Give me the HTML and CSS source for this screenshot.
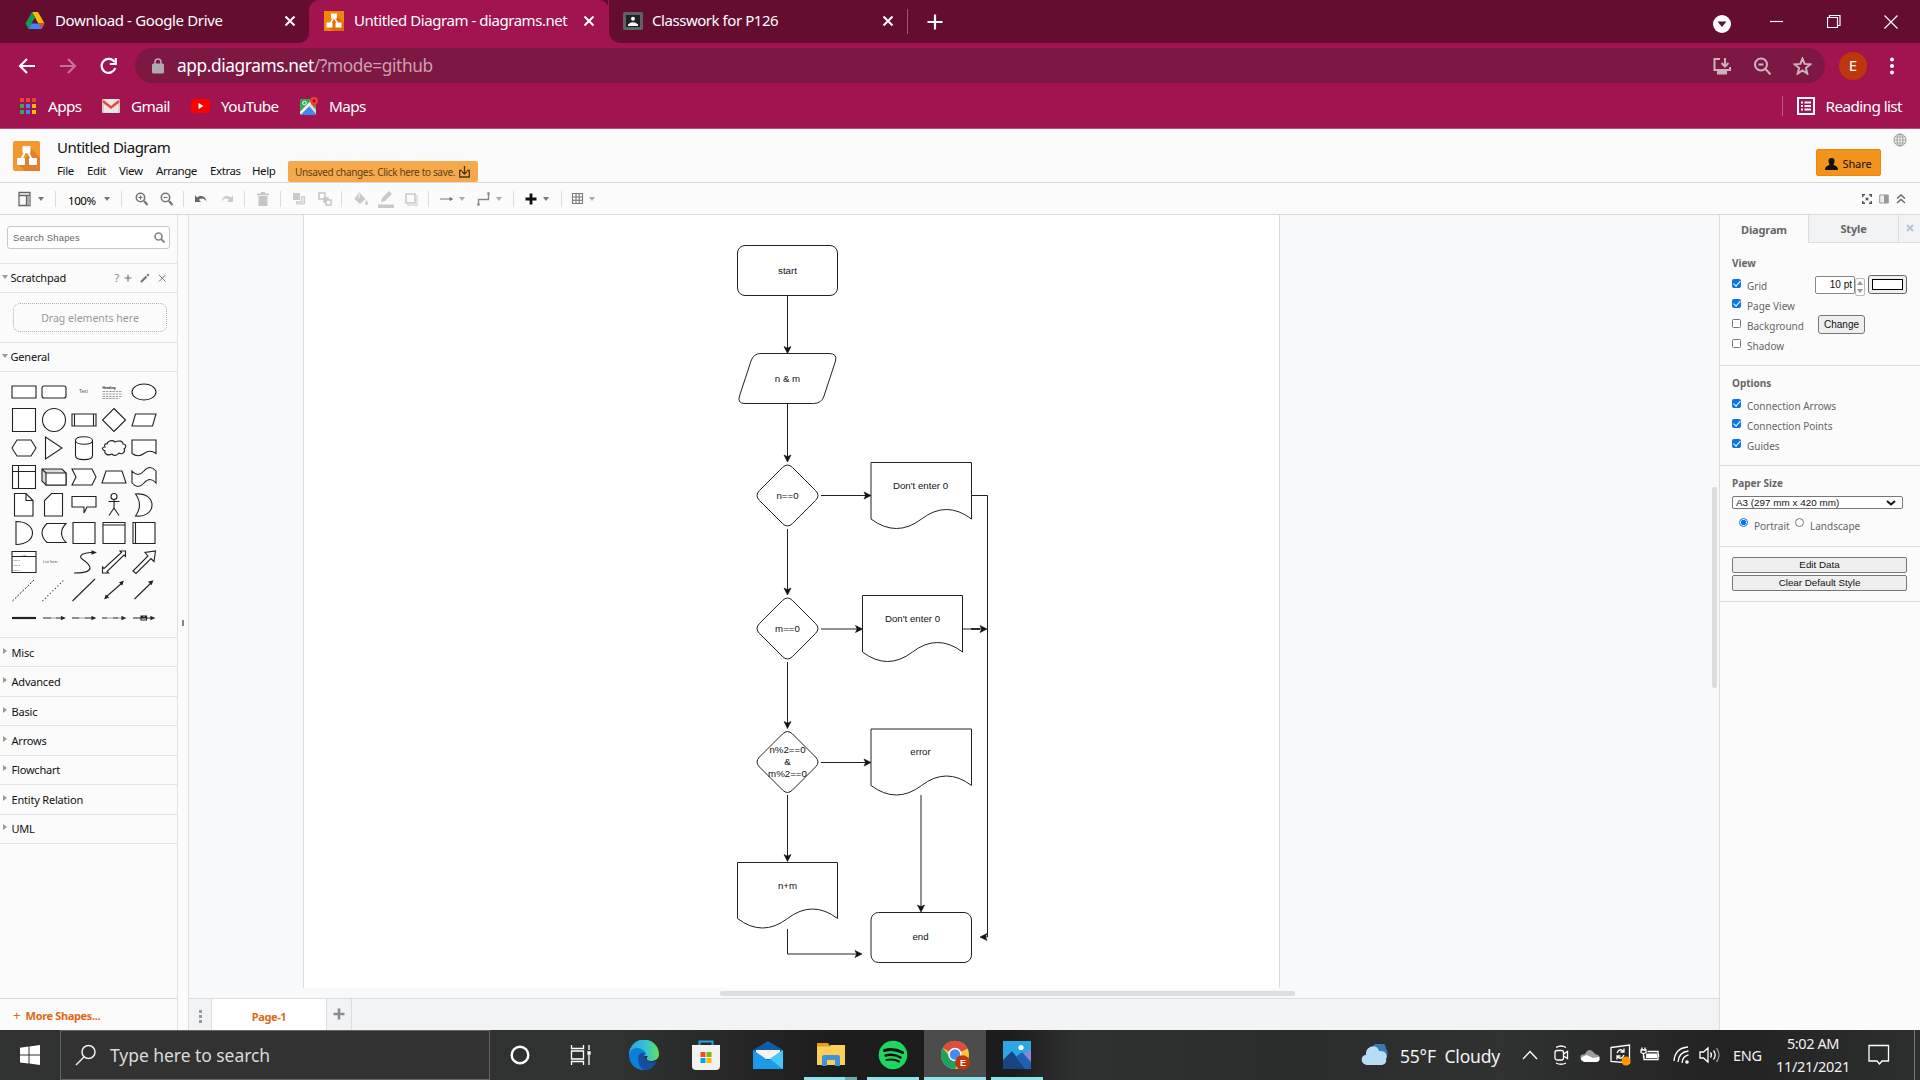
FILE: index.html
```html
<!DOCTYPE html>
<html lang="en">
<head>
<meta charset="utf-8">
<title>Untitled Diagram - diagrams.net</title>
<link rel="stylesheet" href="styles.css">
</head>
<body>
<header class="browser">
  <div class="tabs">
    <div class="tab tab-drive">
      <svg width="20" height="18" viewBox="0 0 20 18"><path d="M7 0h6l6.500 11.500h-6z" fill="#fbbc04"/><path d="M7 0 0.500 11.500 3.500 17 10 5.500z" fill="#0f9d58"/><path d="M3.500 17h13l3-5.500h-13z" fill="#4285f4"/><path d="M16.500 17 13.500 11.500h6z" fill="#ea4335"/></svg>
      <span class="tab-title">Download - Google Drive</span>
      <svg class="x" width="12" height="12" viewBox="0 0 12 12"><path d="M1.500 1.500l9 9M10.500 1.500l-9 9"/></svg>
    </div>
    <div class="tab tab-active">
      <svg width="20" height="20" viewBox="0 0 20 20"><path fill="#f08705" d="M0 0h20v20H0z"/><path fill="#df6c0c" d="M12 4l8 8v8H9l-5-4 7-7z"/><path d="M10 6 5.500 14M10 6l4.500 8" stroke="#fff" stroke-width="1.500"/><path fill="#fff" d="M7 2.500h6v5H7zM2.500 11.500h6v5h-6zM11.500 11.500h6v5h-6z"/></svg>
      <span class="tab-title">Untitled Diagram - diagrams.net</span>
      <svg class="x" width="12" height="12" viewBox="0 0 12 12"><path d="M1.500 1.500l9 9M10.500 1.500l-9 9"/></svg>
    </div>
    <div class="tab tab-class">
      <svg width="20" height="18" viewBox="0 0 20 18"><rect width="20" height="18" rx="1.500" fill="#5f6368"/><path fill="#202124" d="M3 3h14v12H3z"/><circle cx="10" cy="6.800" r="2" fill="#fff"/><path d="M5 14v-1.500q5-4.500 10 0V14z" fill="#fff"/></svg>
      <span class="tab-title">Classwork for P126</span>
      <svg class="x" width="12" height="12" viewBox="0 0 12 12"><path d="M1.500 1.500l9 9M10.500 1.500l-9 9"/></svg>
    </div>
    <svg class="newtab" width="16" height="16" viewBox="0 0 16 16"><path d="M8 .5v15M.5 8h15" stroke="#fff" stroke-width="2.200"/></svg>
    <div class="window-buttons">
      <svg class="drop" width="18" height="18" viewBox="0 0 18 18"><circle cx="9" cy="9" r="9" fill="#fff"/><path d="M4.500 6.500h9L9 12z" fill="#640d31"/></svg>
      <svg width="14" height="14" viewBox="0 0 14 14"><path d="M0 6.500h13"/></svg>
      <svg width="14" height="14" viewBox="0 0 14 14"><path d="M.5 2.500h10v10H.5zM2.500 2V.5h10.500v10H11"/></svg>
      <svg width="14" height="14" viewBox="0 0 14 14"><path d="M.5.5l13 13M13.500.5l-13 13"/></svg>
    </div>
  </div>
  <div class="navbar">
    <svg class="nav-icon" width="18" height="18" viewBox="0 0 18 18"><path d="M17 9H2M9 2 2 9l7 7"/></svg>
    <svg class="nav-icon dim" width="18" height="18" viewBox="0 0 18 18"><path d="M1 9h15M9 2l7 7-7 7"/></svg>
    <svg class="nav-icon" width="18" height="18" viewBox="0 0 18 18"><path d="M14.500 5A7 7 0 1 0 15.300 11M15.800 1v6h-6"/></svg>
    <div class="omnibox">
      <svg width="12" height="16" viewBox="0 0 12 16"><rect y="5.500" width="12" height="10" rx="1.500" fill="#b0a9ad"/><path d="M3 6V4a3 3 0 0 1 6 0v2" fill="none" stroke="#b0a9ad" stroke-width="1.600"/></svg>
      <span class="url"><b>app.diagrams.net</b>/?mode=github</span>
      <svg class="ob" width="19" height="18" viewBox="0 0 19 18"><path d="M7 2H1.500v11h15.500v-3M12 1v8M8.500 6 12 9.500 15.500 6"/><path d="M4 15.500h10" stroke-width="4"/></svg>
      <svg class="ob" width="19" height="18" viewBox="0 0 19 18"><circle cx="8" cy="7.500" r="6"/><path d="M12.500 12l5 5.500M5.500 7.500h5"/></svg>
      <svg class="ob" width="19" height="18" viewBox="0 0 19 18"><path d="M9.500 1.500l2.100 5.400 5.700.4-4.400 3.700 1.400 5.600-4.800-3.100-4.800 3.100 1.400-5.600L1.700 7.300l5.700-.4z"/></svg>
    </div>
    <span class="avatar">E</span>
    <svg width="6" height="18" viewBox="0 0 6 18" fill="#fff"><circle cx="3" cy="2.500" r="2"/><circle cx="3" cy="9" r="2"/><circle cx="3" cy="15.500" r="2"/></svg>
  </div>
  <div class="bookmarks">
    <svg class="bm-icon" width="18" height="18" viewBox="0 0 18 18"><path fill="#ea4335" d="M1 1h4v4H1zM7 1h4v4H7zM13 1h4v4h-4z"/><path fill="#34a853" d="M1 7h4v4H1zM1 13h4v4H1z"/><path fill="#4285f4" d="M7 7h4v4H7zM7 13h4v4H7z"/><path fill="#fbbc04" d="M13 7h4v4h-4zM13 13h4v4h-4z"/></svg>
    <span class="bm bm1">Apps</span>
    <svg class="bm-icon" width="18" height="18" viewBox="0 0 18 18"><rect y="2" width="18" height="14" rx="1.500" fill="#ece6e6"/><path d="M0 16V4l9 7 9-7v12h-2V7l-7 5-7-5v9z" fill="#c9bcbc" opacity=".6"/><path d="M.8 4 9 10.500 17.200 4" fill="none" stroke="#e04a3f" stroke-width="2.400"/></svg>
    <span class="bm bm2">Gmail</span>
    <svg class="bm-icon" width="19" height="18" viewBox="0 0 19 18"><rect y="2" width="19" height="14" rx="4" fill="#f00"/><path d="M7.500 6v6l5-3z" fill="#fff"/></svg>
    <span class="bm bm3">YouTube</span>
    <svg class="bm-icon" width="18" height="18" viewBox="0 0 18 18"><rect y="2" width="16" height="16" rx="1.500" fill="#34a853"/><path d="M1 18 9 9l7 9z" fill="#4285f4"/><path d="M9 9l3-2 4 6v4z" fill="#d8dde0"/><path d="M0 16.500 12.500 4" stroke="#f4f4f4" stroke-width="2.500"/><circle cx="4.500" cy="6" r="1.800" fill="none" stroke="#fff"/><path d="M14 11c-1-3-4-4-4-7a4 4 0 0 1 8 0c0 3-3 4-4 7z" fill="#ea4335"/><circle cx="14" cy="4" r="1.400" fill="#811"/></svg>
    <span class="bm bm4">Maps</span>
    <span class="reading"><svg width="18" height="18" viewBox="0 0 18 18" fill="none" stroke="#fff" stroke-width="2"><path d="M1 1h16v16H1zM4 5.500h2M4 9h2M4 12.500h2M7.500 5.500H14M7.500 9H14M7.500 12.500H14"/></svg><span>Reading list</span></span>
  </div>
</header>

<section class="app-head">
  <svg class="logo" width="27" height="30" viewBox="0 0 27 30"><rect width="27" height="30" rx="2" fill="#f2982c"/><path d="M17 6l10 11v13H12l-7-7 9-8z" fill="#e08031"/><path d="M13.500 8 7.500 20M13.500 8l6 12" stroke="#fff" stroke-width="2"/><g fill="#fff"><rect x="9.500" y="5" width="8" height="7" rx="1"/><rect x="4" y="17" width="8" height="7" rx="1"/><rect x="16" y="17" width="8" height="7" rx="1"/></g></svg>
  <div class="titles">
    <div class="title">Untitled Diagram</div>
    <nav class="menu"><span class="m1">File</span><span class="m2">Edit</span><span class="m3">View</span><span class="m4">Arrange</span><span class="m5">Extras</span><span class="m6">Help</span>
      <span class="unsaved"><span>Unsaved changes. Click here to save.</span><svg width="11" height="12" viewBox="0 0 11 12" fill="none" stroke="#4d3412" stroke-width="1.300"><path d="M3 4.500H.7V11h9.600V4.500H8M5.500 0v8M3 5.500 5.500 8 8 5.500"/></svg></span></nav>
  </div>
  <div class="head-right">
    <span class="share"><svg width="13" height="12" viewBox="0 0 13 12"><path d="M6.500 0a3 3 0 0 1 3 3c0 2-1 2.500-1 4 2 .5 4.500 1.500 4.500 5H0c0-3.500 2.500-4.500 4.500-5 0-1.500-1-2-1-4a3 3 0 0 1 3-3z" fill="#111"/></svg><span>Share</span></span>
    <svg class="globe" width="14" height="14" viewBox="0 0 14 14" fill="none" stroke="#999"><circle cx="7" cy="7" r="6"/><ellipse cx="7" cy="7" rx="3" ry="6"/><path d="M7 1v12M1 7h12M2 4h10M2 10h10" stroke-width=".8"/></svg>
  </div>
</section>

<section class="tools">
  <div class="tg g1"><svg width="16" height="16" viewBox="0 0 16 16" fill="none" stroke="#666"><path d="M2 1.500h11v13H2zM2 4.500h11M9.500 4.500v10" stroke-width="1.300"/><path d="M10 5h3v9h-3z" fill="#aaa" stroke="none"/></svg><i class="caret"></i></div>
  <div class="tg g2"><span>100%</span><i class="caret"></i></div>
  <div class="tg g3"><svg width="16" height="16" viewBox="0 0 16 16" fill="none" stroke="#777" stroke-width="1.600"><circle cx="6.500" cy="6.500" r="4.200"/><path d="M10 10l3.500 4" stroke-width="2.200"/><path d="M4.500 6.500h4M6.500 4.500v4" stroke-width="1.200"/></svg><svg width="16" height="16" viewBox="0 0 16 16" fill="none" stroke="#777" stroke-width="1.600"><circle cx="6.500" cy="6.500" r="4.200"/><path d="M10 10l3.500 4" stroke-width="2.200"/><path d="M4.500 6.500h4" stroke-width="1.200"/></svg></div>
  <div class="tg g4"><svg width="16" height="16" viewBox="0 0 16 16"><path d="M2 4v7h6L5.800 8.800C9 6.500 12 7.500 13.500 11 13 5 7.500 3.500 4 6.500z" fill="#666"/></svg><svg width="16" height="16" viewBox="0 0 16 16"><path d="M14 4v7H8l2.200-2.200C7 6.500 4 7.500 2.500 11 3 5 8.500 3.500 12 6.500z" fill="#ccc"/></svg></div>
  <div class="tg g5"><svg width="16" height="16" viewBox="0 0 16 16" fill="#c6c6c6"><path d="M3.500 5h9v10h-9zM2 2.500h4V1h4v1.500h4v1.700H2z"/></svg></div>
  <div class="tg g6"><svg width="16" height="16" viewBox="0 0 16 16" fill="#c9c9c9"><path d="M2 2h7v7H2z"/><path d="M10.500 5.500v5h-5V13h8V5.500z" fill="#e3e3e3" stroke="#ccc"/></svg><svg width="16" height="16" viewBox="0 0 16 16" fill="#fff" stroke="#c5c5c5" stroke-width="1.500"><path d="M2 2h6v6H2z"/><path d="M7 7h4v4H7z" fill="#ccc"/><path d="M9 9h5v5H9z"/></svg></div>
  <div class="tg g7"><svg width="16" height="16" viewBox="0 0 16 16" fill="#c9c9c9"><path d="M6 1l6.500 7L7 13 1.500 8z"/><path d="M13.500 9q3 4.500 0 5-3-.5 0-5z"/><path d="M6 2v5" stroke="#fafafa"/></svg><svg width="18" height="18" viewBox="0 0 18 18" fill="#c9c9c9"><path d="M4 12l1-4 7-7 3 3-7 7zM1 14.500h16V18H1z"/></svg><svg width="16" height="16" viewBox="0 0 16 16" fill="none" stroke="#c9c9c9" stroke-width="1.600"><path d="M3 3h9v9H3z"/><path d="M4 14.200h10V4" stroke="#ddd"/></svg></div>
  <div class="tg g8"><svg width="16" height="16" viewBox="0 0 16 16" fill="#777" stroke="#777"><path d="M1 8h10"/><path d="M11 6.500 13.500 8 11 9.500z"/></svg><i class="caret lt"></i><svg class="wp" width="16" height="16" viewBox="0 0 16 16" fill="none" stroke="#888" stroke-width="1.300"><path d="M2.500 13.500v-5h10v-6"/><path d="M2 13h1v1H2zM12 2h1v1h-1z" fill="#888"/></svg><i class="caret lt"></i></div>
  <div class="tg g9"><svg width="14" height="16" viewBox="0 0 14 16"><path d="M7 2.500v11M1.500 8h11" stroke="#111" stroke-width="2.800"/></svg><i class="caret"></i></div>
  <div class="tg g10"><svg width="14" height="14" viewBox="0 0 14 14" fill="none" stroke="#777"><path d="M1.500 1.500h10v10h-10zM1.500 5h10M1.500 8.200h10M5 1.500v10M8.200 1.500v10" stroke-width="1.100"/></svg><i class="caret lt"></i></div>
  <div class="tool-right">
    <svg width="10" height="10" viewBox="0 0 10 10" fill="none" stroke="#555" stroke-width="1.500"><path d="M.7 3V.7H3M7 .7h2.300V3M9.300 7v2.300H7M3 9.300H.7V7"/><path d="M3.700 3.700h2.600v2.600H3.700z" fill="#555" stroke="none"/></svg>
    <svg width="10" height="10" viewBox="0 0 10 10"><path d="M.7 1h8.600v8H.7z" fill="#eee" stroke="#999"/><path d="M5 1h4v8H5z" fill="#999"/></svg>
    <svg width="10" height="10" viewBox="0 0 10 10" fill="none" stroke="#666" stroke-width="1.400"><path d="M1 4.500 5 1 9 4.500M1 9 5 5.500 9 9"/></svg>
  </div>
</section>

<main class="work">
  <aside class="sidebar">
    <div class="search-wrap"><div class="search"><span>Search Shapes</span><svg width="11" height="11" viewBox="0 0 11 11" fill="none" stroke="#888" stroke-width="1.700"><circle cx="4.500" cy="4.500" r="3.500"/><path d="M7 7l3.500 3.500" stroke-width="2"/></svg></div></div>
    <div class="sec open"><i></i><span>Scratchpad</span><span class="sp-tools"><em>?</em><svg width="10" height="10" viewBox="0 0 10 10"><path d="M5 1.500v7M1.500 5h7" stroke-width="1.200"/></svg><svg width="10" height="10" viewBox="0 0 10 10"><path d="M1 9l5.500-5.500M7.200 2.800 8.700 1.300" stroke-width="2.300"/></svg><svg width="10" height="10" viewBox="0 0 10 10"><path d="M2 2l6.500 6.500M8.500 2 2 8.500"/></svg></span></div>
    <div class="drag-wrap"><div class="drag">Drag elements here</div></div>
    <div class="sec open general"><i></i><span>General</span></div>
    <div class="shapes">
      <svg viewBox="0 0 30 28"><path d="M3 8h24v12H3z"/></svg>
      <svg viewBox="0 0 30 28"><rect x="3" y="8" width="24" height="12" rx="2"/></svg>
      <svg viewBox="0 0 30 28"><text x="10" y="15" class="tiny">Text</text></svg>
      <svg viewBox="0 0 30 28"><text x="3.500" y="11" class="tiny hd">Heading</text><path class="gray dash2" d="M3.500 13.500h19M3.500 16h20M3.500 18.500h19M3.500 20.500h17"/></svg>
      <svg viewBox="0 0 30 28"><ellipse cx="15" cy="14" rx="12" ry="8"/></svg>
      <svg viewBox="0 0 30 28"><path d="M3.500 2.500h23v23h-23z"/></svg>
      <svg viewBox="0 0 30 28"><circle cx="15" cy="14" r="11.500"/></svg>
      <svg viewBox="0 0 30 28"><path d="M3 8h24v12H3zM5.500 8v12M24.500 8v12"/></svg>
      <svg viewBox="0 0 30 28"><path d="M15 2.500 26.500 14 15 25.500 3.500 14z"/></svg>
      <svg viewBox="0 0 30 28"><path d="M6.500 8H27l-3.500 12H3z"/></svg>
      <svg viewBox="0 0 30 28"><path d="M8 6h14l5 8-5 8H8l-5-8z"/></svg>
      <svg viewBox="0 0 30 28"><path d="M6.500 3v22L23 14z"/></svg>
      <svg viewBox="0 0 30 28"><path d="M6.500 6.500v15c0 5.500 17 5.500 17 0v-15c0-5-17-5-17 0c0 5 17 5 17 0"/></svg>
      <svg viewBox="0 0 30 28"><path d="M8 10c1-4 6-4 8-2 4-2 8-1 8 2 3 0 4 3 1 5 2 3-2 6-5 4-2 3-6 3-7 1-4 2-8 0-7-3-4-2-3-4 0-4-1-2 0-4 2-3z"/></svg>
      <svg viewBox="0 0 30 28"><path d="M3 6h24v13.500q-6-4.500-12 0t-12 0z"/></svg>
      <svg viewBox="0 0 30 28"><path d="M3.500 2.500h23v23h-23zM3.500 8.500h23M9.500 2.500v23"/></svg>
      <svg viewBox="0 0 30 28"><path d="M3 6h20l4 4v12H7l-4-4z" fill="#ddd"/><path d="M7 10h20v12H7zM3 6l4 4"/></svg>
      <svg viewBox="0 0 30 28"><path d="M3 6h20l4 8-4 8H3l4-8z"/></svg>
      <svg viewBox="0 0 30 28"><path d="M7 8h16l4 12H3z"/></svg>
      <svg viewBox="0 0 30 28"><path d="M3 8q6 7 12 0t12 0v12q-6-7-12 0t-12 0z"/></svg>
      <svg viewBox="0 0 30 28"><path d="M5.500 2.500H17l7 7v15.500H5.500zM17 2.500v7h7"/></svg>
      <svg viewBox="0 0 30 28"><path d="M12.500 2.500h11V25h-18V9.500z"/></svg>
      <svg viewBox="0 0 30 28"><path d="M3 5.500h24V16H18l-3 6v-6H3z"/></svg>
      <svg viewBox="0 0 30 28"><circle cx="15" cy="5.500" r="3"/><path d="M15 8.500V17M9.500 10.500h11M15 17l-5 7.500M15 17l5 7.500"/></svg>
      <svg viewBox="0 0 30 28"><path d="M6.500 3c22-2 22 24 0 22q8-11 0-22z"/></svg>
      <svg viewBox="0 0 30 28"><path d="M7 2.500v23c22 0 22-23 0-23z"/></svg>
      <svg viewBox="0 0 30 28"><path d="M8 4.500h19q-9 9.500 0 19H8q-10-9.500 0-19z"/></svg>
      <svg viewBox="0 0 30 28"><path d="M4 3.500h22v21H4z"/></svg>
      <svg viewBox="0 0 30 28"><path d="M4 3.500h22v21H4zM4 6h22"/></svg>
      <svg viewBox="0 0 30 28"><path d="M4 3.500h22v21H4zM6.500 3.500v21"/></svg>
      <svg viewBox="0 0 30 28"><path d="M3 3.500h24v21H3zM3 8.500h24"/><text x="13" y="7.500" class="tiny s">List</text><text x="4" y="13" class="tiny s">Item 1</text><text x="4" y="18" class="tiny s">Item 2</text><text x="4" y="23" class="tiny s">Item 3</text></svg>
      <svg viewBox="0 0 30 28"><text x="4" y="15" class="tiny s2">List Item</text></svg>
      <svg viewBox="0 0 30 28"><path d="M5 25c26 0 14-10 8-14-5-4 4-7 11-6.500"/><path class="fill" d="M23 3l3.500 1.500L23 6z"/></svg>
      <svg viewBox="0 0 30 28"><path d="M3.500 25v-6l1.500 1.500L22.500 4.500 21 3h5.500v5.500L25 7 8 23.500 9.500 25z"/></svg>
      <svg viewBox="0 0 30 28"><path d="M4 23 19 8l-3-3.500L26.500 3 25 13.500 22 10.500 7 25.500z"/></svg>
      <svg viewBox="0 0 30 28"><path class="dash" d="M3.500 25 26 3"/></svg>
      <svg viewBox="0 0 30 28"><path class="dot" d="M3.500 25 26 3"/></svg>
      <svg viewBox="0 0 30 28"><path d="M3.500 25 26 3"/></svg>
      <svg viewBox="0 0 30 28"><path d="M7 21 23 7"/><path class="fill" d="M6 22.500l1-3 2 2zM24 5.500l-3 1 2 2z"/></svg>
      <svg viewBox="0 0 30 28"><path d="M5.500 23 23 6"/><path class="fill" d="M23.500 5l-3.500 1 2.300 2.300z"/></svg>
      <svg viewBox="0 0 30 28"><path d="M3 14h24" stroke-width="2.200"/></svg>
      <svg viewBox="0 0 30 28"><path d="M4 14h8M17 14h5"/><path class="gray" d="M12 14h5"/><path class="fill" d="M22.500 12.700l3 1.300-3 1.300z"/></svg>
      <svg viewBox="0 0 30 28"><path d="M3 14h7M16 14h7"/><path class="gray" d="M10 14h7"/><path class="fill" d="M23 12.700l3 1.300-3 1.300z"/></svg>
      <svg viewBox="0 0 30 28"><path d="M3 14h5M14 14h5"/><path class="gray" d="M8 14h16"/><path class="fill" d="M23 12.700l3 1.300-3 1.300z"/></svg>
      <svg viewBox="0 0 30 28"><path d="M4 14h19M12 12h5.500v4H12zM12 12l3 2 3-2"/><path class="fill" d="M22 12.700l3 1.300-3 1.300z"/></svg>
    </div>
    <div class="sec"><i></i><span>Misc</span></div>
    <div class="sec"><i></i><span>Advanced</span></div>
    <div class="sec"><i></i><span>Basic</span></div>
    <div class="sec"><i></i><span>Arrows</span></div>
    <div class="sec"><i></i><span>Flowchart</span></div>
    <div class="sec"><i></i><span>Entity Relation</span></div>
    <div class="sec"><i></i><span>UML</span></div>
    <div class="more"><span class="pl">+</span> More Shapes...</div>
  </aside>
  <div class="split"><i></i></div>
  <section class="center">
    <svg class="canvas" width="1530" height="783" viewBox="189 215 1530 783">
      <path d="M303.500 215v773M1279.500 215v773" stroke="#dadce0" fill="none"/>
      <path d="M304 215h975v773H304z" fill="#fff" stroke="none"/>
      <g class="shape">
        <rect x="737.500" y="245.500" width="100" height="50" rx="7.500"/>
        <path d="M761 353.500h68q8.500 0 6.500 7.500L824 396q-2.500 7.500-10.500 7.500H745q-8 0-5.500-7.500L751 361q2.500-7.500 10-7.500z"/>
        <path d="M782.500 467.500q5-5 10 0l23 23q5 5 0 10l-23 23q-5 5-10 0l-23-23q-5-5 0-10z"/>
        <path d="M782.500 600.500q5-5 10 0l23 23q5 5 0 10l-23 23q-5 5-10 0l-23-23q-5-5 0-10z"/>
        <path d="M782.500 734q5-5 10 0l23 23q5 5 0 10l-23 23q-5 5-10 0l-23-23q-5-5 0-10z"/>
        <path d="M871 462.500h100.500V519q-25-19-50 0t-50.500 0z"/>
        <path d="M862.500 595.500h100V652q-25-19-50 0t-50 0z"/>
        <path d="M871 729h100.500v56.500q-25-19-50 0t-50.500 0z"/>
        <path d="M737.500 862.500h100v56q-25-19-50 0t-50 0z"/>
        <rect x="871" y="912.500" width="100.500" height="50" rx="7.500"/>
        <path d="M787.500 296v53M787.500 404v53M787.500 529v62M787.500 662v62M787.500 795v62M921 795v112M821 495.500h46M821 629h37M821 762.500h46M971.500 495.500h16V937h-4M962.500 629h20M787.500 929v25H857"/>
        <path d="M971 629h9" stroke-width="1.800"/>
      </g>
      <g class="head">
        <path d="M787.500 353.500l-3.500-7 3.500 1.700 3.500-1.700zM787.500 462l-3.500-7 3.500 1.700 3.500-1.700zM787.500 595l-3.500-7 3.500 1.700 3.500-1.700zM787.500 728.500l-3.500-7 3.500 1.700 3.500-1.700zM787.500 861.500l-3.500-7 3.500 1.700 3.500-1.700zM921 912l-3.500-7 3.500 1.700 3.500-1.700z"/>
        <path d="M871 495.500l-7-3.500 1.700 3.500-1.700 3.500zM862.500 629l-7-3.500 1.700 3.500-1.700 3.500zM871 762.500l-7-3.500 1.700 3.500-1.700 3.500zM987 629l-7-3.500 1.700 3.500-1.700 3.500zM862 954l-7-3.500 1.700 3.500-1.700 3.500zM980 937l7-3.500-1.700 3.500 1.700 3.500z"/>
      </g>
      <g class="label">
        <text x="787.500" y="274">start</text><text x="787.500" y="382">n &amp; m</text><text x="787.500" y="499">n==0</text><text x="920.500" y="489">Don't enter 0</text>
        <text x="787.500" y="632">m==0</text><text x="912.500" y="622">Don't enter 0</text>
        <text x="787.500" y="753">n%2==0</text><text x="787.500" y="765">&amp;</text><text x="787.500" y="777">m%2==0</text><text x="920.500" y="755">error</text>
        <text x="787.500" y="889">n+m</text><text x="920.500" y="940">end</text>
      </g>
      <rect x="720" y="991" width="575" height="5" rx="2" fill="#dcdddf"/>
      <rect x="1712" y="487" width="5" height="201" rx="2" fill="#dcdddf"/>
    </svg>
    <div class="pages"><span class="dots"><i></i><i></i><i></i></span><span class="page">Page-1</span><span class="addp"><svg width="12" height="12" viewBox="0 0 12 12"><path d="M6 .5v11M.5 6h11" stroke="#8b8d90" stroke-width="2.600"/></svg></span></div>
  </section>
  <aside class="format">
    <div class="ftabs"><span class="ft on">Diagram</span><span class="ft">Style</span><span class="fx"><svg width="8" height="8" viewBox="0 0 8 8"><path d="M1 1l6 6M7 1 1 7" stroke="#b4c6d8" stroke-width="2"/></svg></span></div>
    <div class="fsec s1">
      <h4>View</h4>
      <div class="frow"><i class="cb on"></i><span>Grid</span><span class="num">10 pt</span><span class="spin"><i class="up"></i><i class="dn"></i></span><span class="color"><i></i></span></div>
      <div class="frow"><i class="cb on"></i><span>Page View</span></div>
      <div class="frow"><i class="cb"></i><span>Background</span><span class="change">Change</span></div>
      <div class="frow"><i class="cb"></i><span>Shadow</span></div>
    </div>
    <div class="fsec s2">
      <h4>Options</h4>
      <div class="frow"><i class="cb on"></i><span>Connection Arrows</span></div>
      <div class="frow"><i class="cb on"></i><span>Connection Points</span></div>
      <div class="frow"><i class="cb on"></i><span>Guides</span></div>
    </div>
    <div class="fsec s3">
      <h4>Paper Size</h4>
      <div class="select"><span>A3 (297 mm x 420 mm)</span><svg width="10" height="6" viewBox="0 0 10 6"><path d="M1 1l4 3.500L9 1" fill="none" stroke="#111" stroke-width="2"/></svg></div>
      <div class="radios"><i class="rb on"></i><span class="r1">Portrait</span><i class="rb"></i><span>Landscape</span></div>
    </div>
    <div class="fsec s4"><div class="btn">Edit Data</div><div class="btn">Clear Default Style</div></div>
  </aside>
</main>

<footer class="taskbar">
  <span class="start"><svg width="20" height="20" viewBox="0 0 20 20" fill="#fff"><path d="M0 2.800 8.500 1.600v8H0zM9.500 1.500 20 0v9.600H9.500zM0 10.600h8.500v8L0 17.400zM9.500 10.600H20V20L9.500 18.600z"/></svg></span>
  <div class="tsearch"><svg width="22" height="22" viewBox="0 0 22 22" fill="none" stroke="#eee" stroke-width="1.500"><circle cx="13.500" cy="8" r="6.500"/><path d="M9 13l-8 8"/></svg><span>Type here to search</span></div>
  <div class="apps">
    <span><svg width="22" height="22" viewBox="0 0 22 22"><circle cx="11" cy="11" r="8.300" fill="none" stroke="#fff" stroke-width="2.400"/></svg></span>
    <span><svg width="22" height="22" viewBox="0 0 22 22" fill="none" stroke="#fff" stroke-width="1.300"><path d="M1.500 1v3.500h12V1M1.500 7h12v8h-12zM1.500 21v-3.500h12V21M19 1v5M19 11v10"/><path d="M18 8h2v2h-2z" fill="#fff"/></svg></span>
    <span><svg width="30" height="30" viewBox="0 0 30 30"><defs><linearGradient id="ea"><stop offset="0" stop-color="#2aa5e0"/><stop offset=".55" stop-color="#35c1d6"/><stop offset="1" stop-color="#62df5c"/></linearGradient></defs><path d="M0 15a15 15 0 0 1 30-1c0 5-4 7-8 7-5 0-5-3-3-5z" fill="url(#ea)"/><path d="M0 15C1 8 9 6 14 10c3 2 3 4 3 5-4-1-6 3-4 7 2 5 7 6 11 5-10 7-24 1-24-12z" fill="#0c7fd8"/><path d="M9 18c0-4 3-6 7-5-3 4 2 11 12 8-2 5-7 9-13 9-4-2-6-7-6-12z" fill="#134f9e"/></svg></span>
    <span><svg width="30" height="30" viewBox="0 0 30 30"><path d="M8.500 7V1.500h13V7" fill="none" stroke="#29a3e8" stroke-width="2"/><path d="M1 5h28v21q0 4-4 4H5q-4 0-4-4z" fill="#f2f2f2"/><path fill="#f25022" d="M9.500 12h5v5h-5z"/><path fill="#7fba00" d="M15.500 12h5v5h-5z"/><path fill="#00a4ef" d="M9.500 18h5v5h-5z"/><path fill="#ffb900" d="M15.500 18h5v5h-5z"/></svg></span>
    <span><svg width="30" height="30" viewBox="0 0 30 30"><path d="M0 10 15 1l15 9-4 9H4z" fill="#0c5ca8"/><path d="M3 10h24v9H3z" fill="#f3f3f3"/><path d="M0 10v19h30V10L17 19q-2 1-4 0z" fill="#1d9bea"/><path d="M30 10v19L17 19z" fill="#45c8f8"/></svg></span>
    <span class="run split-run"><svg width="30" height="30" viewBox="0 0 30 30"><path d="M1 3h11l2 3v5H1z" fill="#dfa11a"/><path d="M1 6.500h12L15 5h14v20H1z" fill="#fbcf58"/><path d="M6 26V17q0-2 2-2h14q2 0 2 2v9h-5v-6h-8v6z" fill="#3f92d6"/></svg></span>
    <span class="run"><svg width="30" height="30" viewBox="0 0 30 30"><circle cx="15" cy="15" r="14.300" fill="#1ed760"/><g fill="none" stroke="#111" stroke-linecap="round"><path d="M6.500 10.500q9-2.500 18 2" stroke-width="3"/><path d="M7.500 15.500q8-2 15 2" stroke-width="2.500"/><path d="M8.500 20q7-1.500 12.500 1.500" stroke-width="2"/></g></svg></span>
    <span class="run cur"><svg width="30" height="30" viewBox="0 0 30 30"><circle cx="15" cy="15" r="14" fill="#fbc62f"/><path d="M15 15 2.800 8A14 14 0 0 1 27.500 8.500z" fill="#dd4d41"/><path d="M2.800 8A14 14 0 0 0 15 29l5-10-9-1z" fill="#1da261"/><circle cx="15" cy="14.500" r="6.700" fill="#fff"/><circle cx="15" cy="14.500" r="5.300" fill="#4a8af4"/><circle cx="22.500" cy="22.500" r="7.300" fill="#bf360c"/><text x="20" y="26" class="eb">E</text></svg></span>
    <span class="run"><svg width="30" height="30" viewBox="0 0 30 30"><path d="M1 1h28v28H1z" fill="#2aa7e6"/><path d="M16 17 29 9v20H16z" fill="#8a86d8"/><path d="M1 20 10 11 24 29H1z" fill="#174683"/><path d="M14 17l6-5 9 10v7H23z" fill="#1e60b4"/><circle cx="19" cy="7.500" r="2.600" fill="#fff"/></svg></span>
  </div>
  <div class="tray">
    <svg class="weather" width="28" height="22" viewBox="0 0 28 22"><path d="M12 4a6 6 0 0 1 13 1c2 2 2 6 0 9z" fill="#3d78b5"/><path d="M7 21C-1 21-1 11 5 11 4 2 16-1 18 7c7-1 9 5 7 8 1 4-2 6-5 6z" fill="#b5ddf6"/></svg>
    <span class="temp">55°F&nbsp; Cloudy</span>
    <svg class="chev" width="16" height="10" viewBox="0 0 16 10"><path d="M1 9l7-7.500L15 9"/></svg>
    <svg class="meet" width="16" height="20" viewBox="0 0 16 20"><rect x="2" y="5.500" width="8.500" height="9.500" rx="2"/><path d="M10.500 9l4-2.500v7l-4-2.500M3 2.500q5-3 10 0M3 18q5 2.500 10 0"/></svg>
    <svg class="od" width="20" height="14" viewBox="0 0 20 14"><path d="M4 13q-5-1-3-6l4-1q4-8 10 0 5 1 5 4z" fill="#9e9e9e" stroke="none"/><path d="M4 14q-5-2-2-5l5-2 6 3 6-1q2 4-2 5z" fill="#fff" stroke="none"/></svg>
    <svg class="upd" width="22" height="24" viewBox="0 0 22 24"><path d="M1 4.500 19.500 2v18L1 18.500z"/><path d="M7 10q3-6 7-1M14 5.500V9h-3.500M14 12q-3 6-7 1M7 16.500V13h3.500"/><circle cx="16" cy="18" r="4.500" fill="#ff9800" stroke="none"/></svg>
    <svg class="bat" width="20" height="16" viewBox="0 0 20 16"><path d="M7.500 4.500H18v8H4v-4M18.500 7v3M1 3h5v2.500q-2.500 2-5 0zM2 3V.5M5 3V.5M3.500 7v4"/><path d="M6 6.500h11V11H6z" fill="#fff" stroke="none"/></svg>
    <svg class="wifi" width="17" height="18" viewBox="0 0 17 18"><path d="M1 15Q2 2 15 1M5 16Q6 6 15.500 5M9 17q.5-7 6.500-8"/><circle cx="14" cy="16" r="1.800" fill="#fff" stroke="none"/></svg>
    <svg class="vol" width="22" height="20" viewBox="0 0 22 20"><path d="M1 7h3.500L9 3v14l-4.500-4H1zM11.500 7.500q2 2.500 0 5M14.500 5.500q3.500 4.500 0 9"/><path d="M17.500 3q5 7 0 14" opacity=".5"/></svg>
    <span class="lang">ENG</span>
    <span class="clock"><span>5:02 AM</span><span class="date">11/21/2021</span></span>
    <svg class="note" width="22" height="22" viewBox="0 0 22 22"><path d="M1 1.500h19.500v15.500H14L11.500 20 9 17H1z"/></svg>
    <i class="peek"></i>
  </div>
</footer>
</body>
</html>
```
FILE: styles.css
```css
* { box-sizing: border-box; }
body { margin: 0; width: 1920px; height: 1080px; overflow: hidden; display: flex; flex-direction: column; font-family: "Noto Sans", sans-serif; background: #fbfbfb; white-space: nowrap; }
svg { display: block; flex: none; }
span, i { flex: none; }
i, em { font-style: normal; }

/* browser chrome */
.browser { height: 129px; background: #a1144f; border-bottom: 1px solid #b84c79; color: #fff; }
.tabs { height: 43px; background: linear-gradient(90deg, #640d31 0 290px, #a1144f 290px 309px, #640d31 309px 608px, #a1144f 608px 640px, #640d31 640px); display: flex; align-items: center; }
.tab { height: 43px; display: flex; align-items: center; padding-bottom: 1px; }
.tab-title { font-size: 15px; letter-spacing: -.45px; padding-bottom: 2px; }
.x { fill: none; stroke: #fff; stroke-width: 2; margin-left: auto; }
.tab-drive { width: 309px; padding-left: 25px; padding-right: 13px; border-radius: 0 0 10px 0; background: #640d31; }
.tab-drive .tab-title { margin-left: 10px; letter-spacing: -.35px; }
.tab-active { width: 300px; padding-left: 15px; padding-right: 14px; background: #a1144f; border-radius: 10px 10px 0 0; }
.tab-active .tab-title { margin-left: 10px; }
.tab-class { position: relative; width: 299px; padding-left: 14px; padding-right: 14px; background: #640d31; border-radius: 0 0 0 12px; }
.tab-class .tab-title { margin-left: 9px; }
.tab-class::after { content: ""; position: absolute; right: 0; top: 9px; width: 1px; height: 25px; background: #95597a; }
.newtab { margin-left: 19px; }
.window-buttons { margin-left: auto; display: flex; align-items: center; fill: none; stroke: #fff; stroke-width: 1.200; padding-right: 22px; height: 38px; gap: 43px; }
.drop { stroke: none; margin-top: 5px; margin-right: -4px; }
.navbar { height: 45px; display: flex; align-items: center; padding-left: 18px; }
.nav-icon { fill: none; stroke: #fff; stroke-width: 2.200; margin-right: 23px; }
.nav-icon + .nav-icon + .nav-icon { margin-right: 17px; }
.nav-icon.dim { stroke: #c4729a; }
.omnibox { width: 1690px; height: 35px; border-radius: 18px; background: #7d1842; display: flex; align-items: center; padding-left: 17px; padding-right: 13px; }
.url { margin-left: 13px; font-size: 17.300px; letter-spacing: -.4px; color: #cba2b3; margin-right: auto; padding-bottom: 1px; }
.url b { font-weight: 400; color: #fff; }
.ob { fill: none; stroke: #c9b3bd; stroke-width: 2; margin-left: 21px; }
.avatar { width: 28px; height: 28px; margin-left: 14px; margin-right: 22px; border-radius: 50%; background: #bf360c; font-size: 15px; line-height: 27px; text-align: center; }
.bookmarks { height: 36px; display: flex; align-items: center; padding-left: 19px; font-size: 15.300px; }
.bm-icon { margin-right: 11px; }
.bm { letter-spacing: -.6px; padding-bottom: 1px; }
.bm1 { width: 54px; }
.bm2 { width: 60px; }
.bm3 { width: 79px; letter-spacing: -.6px; }
.reading { margin-left: auto; margin-right: 18px; border-left: 1px solid #c05a85; height: 20px; display: flex; align-items: center; padding-left: 14px; letter-spacing: -.6px; gap: 11px; }

/* editor header */
.app-head { height: 54px; display: flex; border-bottom: 1px solid #d8d9da; padding-left: 13px; }
.logo { margin-top: 12px; margin-right: 17px; }
.title { font-size: 15px; line-height: 20px; margin-top: 8px; height: 24px; letter-spacing: -.5px; color: #111; }
.menu { display: flex; font-size: 11.500px; line-height: 20px; letter-spacing: -.4px; color: #111; }
.m1 { width: 30px; } .m2 { width: 32px; } .m3 { width: 37px; } .m4 { width: 54px; } .m5 { width: 42px; } .m6 { width: 36px; }
.unsaved { width: 190px; height: 21px; background: #f5a94a; border-radius: 2px; color: #5f4216; font-size: 10px; padding: 1px 8px 0 7px; display: flex; align-items: center; justify-content: space-between; letter-spacing: -.34px; }
.unsaved span { width: 162px; }
.head-right { margin-left: auto; display: flex; padding-right: 13px; }
.share { width: 65px; height: 27px; margin-top: 20px; margin-right: 12px; background: #f2931e; border: 1px solid #f08705; border-radius: 2px; font-size: 11px; display: flex; align-items: center; justify-content: center; gap: 4px; color: #111; padding-top: 2px; letter-spacing: -.1px; }
.globe { margin-top: 4px; }

/* toolbar */
.tools { height: 32px; display: flex; align-items: center; border-bottom: 1px solid #d8d9da; }
.tg { height: 16px; display: flex; align-items: center; border-right: 1px solid #ddd; }
.caret { width: 0; height: 0; border: 3px solid transparent; border-top: 4px solid #777; border-bottom: 0; margin-left: 5px; }
.caret.lt { border-top-color: #aaa; margin-left: 4px; }
.g1 { width: 56px; padding-left: 17px; }
.g2 { width: 66px; padding-left: 12px; font-size: 11.500px; letter-spacing: -.4px; }
.g2 span { width: 31px; padding-top: 4px; }
.g3 { width: 62px; padding-left: 12px; gap: 9px; }
.g4 { width: 61px; padding-left: 9px; gap: 10px; }
.g5 { width: 36px; justify-content: center; }
.g6 { width: 61px; padding-left: 10px; gap: 10px; }
.g7 { width: 87px; padding-left: 11px; gap: 8px; }
.g8 { width: 85px; padding-left: 10px; }
.wp { margin-left: 11px; }
.g9 { width: 48px; padding-left: 10px; }
.g10 { border: 0; padding-left: 9px; }
.tool-right { margin-left: auto; display: flex; gap: 7px; margin-right: 14px; }

/* work area */
.work { height: 815px; display: flex; }
.sidebar { width: 177px; display: flex; flex-direction: column; }
.search-wrap { height: 49px; padding: 11px 7px 0; border-bottom: 1px solid #e2e3e5; }
.search { height: 23px; border: 1px solid #c9c9c9; border-radius: 3px; background: #fff; display: flex; align-items: center; justify-content: space-between; padding: 0 4px 0 5px; font: 9.500px "Liberation Sans", sans-serif; letter-spacing: .15px; color: #666; }
.sec { height: 29.450px; border-bottom: 1px solid #e2e3e5; display: flex; align-items: center; font-size: 11px; letter-spacing: -.2px; color: #111; }
.sec i { width: 0; height: 0; margin: 0 5px 3px 3px; border: 3.500px solid transparent; border-left: 4px solid #999; border-right: 0; }
.sec span { margin-left: -.5px; }
.sec.open { height: 29px; padding-bottom: 1px; }
.sec.open i { border: 3.500px solid transparent; border-top: 4px solid #999; border-bottom: 0; margin: 0 3px 1px 2px; }
.sec .sp-tools { margin-left: auto; display: flex; align-items: center; gap: 7px; margin-right: 10px; color: #888; fill: none; stroke: #777; }
.sp-tools em { font-size: 11px; margin-right: -3px; }
.drag-wrap { height: 50px; padding: 10px 10px 0 13px; border-bottom: 1px solid #e2e3e5; }
.drag { height: 29px; border: 1px dotted #aaa; border-radius: 7px; text-align: center; font-size: 10.500px; line-height: 28px; color: #999; }
.shapes { height: 266px; border-bottom: 1px solid #e2e3e5; padding: 5.500px 0 0 9px; display: grid; grid-template-columns: repeat(5, 30px); grid-auto-rows: 28.350px; align-content: start; fill: #fff; stroke: #222; stroke-width: 1.100; }
.shapes svg { width: 30px; height: 28px; }
.shapes .fill { fill: #222; }
.shapes .gray { stroke: #888; stroke-width: .8; }
.shapes .dash { stroke-dasharray: 2 1.500; stroke-width: 1; }
.shapes .dash2 { stroke-dasharray: 2.500 .8; }
.shapes .dot { stroke-dasharray: 1 2.500; }
.tiny { font: 4.800px "Liberation Sans", sans-serif; fill: #555; stroke: none; }
.tiny.hd { font-weight: 700; font-size: 3.300px; fill: #111; }
.tiny.s { font-size: 2.500px; }
.tiny.s2 { font-size: 3.800px; }
.more { margin-top: auto; height: 32px; border-top: 1px solid #d5d7da; padding: 0 0 0 13px; color: #dc6a14; font-size: 11px; font-weight: 700; line-height: 32px; letter-spacing: -.35px; }
.pl { font-size: 13px; font-weight: 400; margin-right: 3px; }
.split { width: 12px; border: solid #dfe0e2; border-width: 0 1px; display: flex; align-items: center; justify-content: center; }
.split i { width: 2px; height: 6px; background: #888; }
.center { width: 1530px; background: #f8f9fb; }
.shape { fill: none; stroke: #222; stroke-width: 1; }
.head { fill: #111; stroke: #111; stroke-width: .6; }
.label { font: 9.700px "Liberation Sans", sans-serif; fill: #111; text-anchor: middle; }
.pages { height: 32px; background: #f1f3f4; border-top: 1px solid #dadce0; display: flex; }
.dots { width: 23px; display: flex; flex-direction: column; align-items: center; justify-content: center; gap: 2px; border-right: 1px solid #dadce0; padding-top: 3px; }
.dots i { width: 3px; height: 3px; background: #999; }
.page { width: 115px; background: #fff; border-right: 1px solid #dadce0; text-align: center; font-size: 11px; font-weight: 700; color: #dc6a14; line-height: 35px; letter-spacing: -.4px; }
.addp { width: 25px; border-right: 1px solid #dadce0; padding: 9px 0 0 6px; }

/* format panel */
.format { width: 201px; border-left: 1px solid #dadce0; color: #666; font-size: 10px; }
.ftabs { height: 28px; display: flex; font-weight: 700; font-size: 11px; line-height: 27px; }
.ft { width: 89px; text-align: center; background: #f1f3f4; border-bottom: 1px solid #dadce0; letter-spacing: -.15px; }
.ft.on { background: none; border-bottom: 0; border-right: 1px solid #dadce0; line-height: 29px; }
.fx { width: 22px; background: #f1f3f4; border-left: 1px solid #dadce0; border-bottom: 1px solid #dadce0; padding: 9px 0 0 7px; }
.fsec { border-bottom: 1px solid #dadce0; padding: 0 13px 0 12px; }
.s1 { height: 123px; padding-top: 10px; }
.s2 { height: 100px; padding-top: 7px; }
.s3 { height: 81px; padding-top: 7px; }
.s4 { height: 55px; padding-top: 10px; }
h4 { margin: 0; font-size: 10px; line-height: 20px; height: 22px; }
.frow { height: 20px; display: flex; align-items: center; letter-spacing: 0; }
.frow > span:nth-child(2) { width: 68px; padding-top: 1px; }
.cb { width: 9px; height: 9px; border: 1px solid #777; border-radius: 1.500px; background: #fff; margin: 0 6px 3px 0; }
.cb.on { background: #0b74ea; border-color: #0b74ea; display: grid; place-items: center; }
.cb.on::after { content: ""; width: 3px; height: 6px; border: solid #fff; border-width: 0 1.300px 1.300px 0; transform: rotate(42deg) translate(-.5px, -.5px); }
.num { width: 40px; height: 18px; border: 1px solid #888; border-radius: 2px; background: #fff; color: #111; font: 10px/16px "Liberation Sans", sans-serif; text-align: right; padding-right: 2px; }
.spin { width: 10px; height: 18px; margin: 4px 3px 0 0; border: 1px solid #bbb; border-radius: 2px; display: flex; flex-direction: column; align-items: center; justify-content: space-around; }
.up { border: 3px solid transparent; border-bottom: 4px solid #999; border-top: 0; }
.dn { border: 3px solid transparent; border-top: 4px solid #999; border-bottom: 0; }
.color { width: 39px; height: 19px; border: 1px solid #666; border-radius: 3px; background: #efefef; padding: 3px; margin-bottom: 1px; }
.color i { display: block; height: 11px; border: 1px solid #000; background: #fff; }
.change { width: 47px; height: 19px; margin: 0 0 1px 3px; border: 1px solid #777; border-radius: 3px; background: #efefef; color: #111; font: 10px/17px "Liberation Sans", sans-serif; text-align: center; }
.select { width: 171px; height: 13px; margin-top: 1px; border: 1px solid #777; border-radius: 2px; background: #fff; color: #111; font: 9.900px/12px "Liberation Sans", sans-serif; display: flex; justify-content: space-between; align-items: center; padding: 0 6px 0 3px; }
.radios { display: flex; align-items: center; height: 29px; padding-left: 7px; }
.rb { width: 9px; height: 9px; border: 1px solid #777; border-radius: 50%; background: #fff; margin: 0 6px 3px 0; }
.rb.on { border-color: #0b74ea; background: radial-gradient(circle, #0b74ea 2.500px, #fff 3px); }
.radios span { padding-top: 4px; }
.r1 { width: 41px; }
.btn { height: 16px; margin-bottom: 2px; border: 1px solid #777; border-radius: 2px; background: #efefef; color: #111; font: 9.800px/14px "Liberation Sans", sans-serif; text-align: center; }

/* taskbar */
.taskbar { height: 50px; display: flex; background: linear-gradient(90deg, #303231 0, #303231 620px, #1d1d1d 830px, #1c1c1c 1010px, #2f3130 1080px, #2b2d2c 1300px, #303231 1500px, #222 1730px, #2d2f2e 1920px); color: #f2f2f2; }
.start { width: 60px; padding: 15px 0 0 20px; }
.tsearch { width: 430px; border: 1px solid #646464; background: #323232; display: flex; align-items: center; padding-left: 14px; font-size: 17.500px; letter-spacing: -.05px; color: #dadada; }
.tsearch span { margin-left: 13px; }
.apps { display: flex; }
.apps span { width: 62px; height: 50px; display: flex; align-items: center; justify-content: center; position: relative; }
.apps span:first-child { width: 60px; }
.apps span:nth-child(3), .apps span:nth-child(6) { width: 63px; }
.apps .run::after { content: ""; position: absolute; left: 5px; right: 5px; bottom: 0; height: 3px; background: #8fe3ee; }
.apps .split-run::after { background: linear-gradient(90deg, #8fe3ee 41px, #6fa9b0 41px); }
.apps .cur { background: #4c4c4c; }
.apps .cur::after { left: 0; right: 0; }
.eb { font: 700 9px "Liberation Sans", sans-serif; fill: #fff; }
.tray { margin-left: auto; display: flex; align-items: center; fill: none; stroke: #fff; stroke-width: 1.300; width: 559px; }
.tray .weather { stroke: none; margin-right: 11px; }
.temp { width: 122px; font-size: 17.500px; letter-spacing: -.2px; padding-top: 2px; }
.chev { margin-right: 15px; }
.meet { margin-right: 11px; }
.od { margin-right: 10px; }
.upd { margin-right: 8px; }
.bat { margin-right: 13px; }
.wifi { margin-right: 9px; }
.vol { margin-right: 12px; }
.lang { width: 38px; font-size: 14.500px; letter-spacing: -.3px; }
.clock { width: 84px; display: flex; flex-direction: column; align-items: center; font-size: 14.500px; line-height: 23px; letter-spacing: -.4px; }
.date { letter-spacing: -.3px; }
.note { margin-left: 13px; }
.peek { margin-left: auto; margin-right: 5px; width: 1px; height: 50px; background: #777; }
```
